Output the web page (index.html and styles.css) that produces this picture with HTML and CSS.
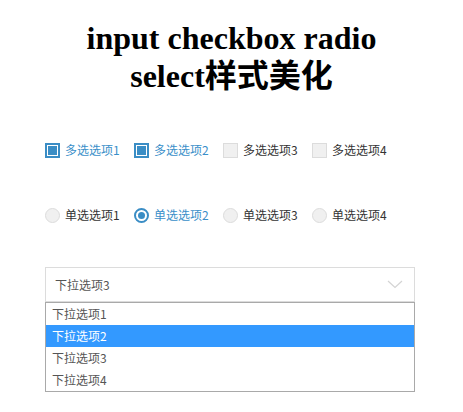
FILE: index.html
```html
<!DOCTYPE html>
<html>
<head>
<meta charset="utf-8">
<link rel="stylesheet" href="styles.css">
</head>
<body>
<h1 class="title">input checkbox radio select样式美化</h1>
<div class="wrap">
  <div class="row checks">
    <label class="opt on"><span class="box"></span>多选选项1</label>
    <label class="opt on"><span class="box"></span>多选选项2</label>
    <label class="opt"><span class="box"></span>多选选项3</label>
    <label class="opt"><span class="box"></span>多选选项4</label>
  </div>
  <div class="row radios">
    <label class="opt"><span class="dot"></span>单选选项1</label>
    <label class="opt on"><span class="dot"></span>单选选项2</label>
    <label class="opt"><span class="dot"></span>单选选项3</label>
    <label class="opt"><span class="dot"></span>单选选项4</label>
  </div>
  <div class="select">
    <span class="value">下拉选项3</span>
    <svg class="chev" width="16" height="9" viewBox="0 0 16 9"><path d="M1 1 L8 7.5 L15 1" fill="none" stroke="#d4d4d4" stroke-width="1.2"/></svg>
  </div>
  <ul class="list">
    <li>下拉选项1</li>
    <li class="sel">下拉选项2</li>
    <li>下拉选项3</li>
    <li>下拉选项4</li>
  </ul>
</div>
</body>
</html>
```
FILE: styles.css
```css
body {
  margin: 8px;
  background: #fff;
}
.title {
  font-family: "Liberation Serif", "Noto Sans CJK SC", serif;
  font-size: 32px;
  font-weight: bold;
  text-align: center;
  width: 300px;
  margin: 11px auto 0;
  line-height: 38px;
  color: #000;
}
.wrap {
  width: 370px;
  margin: 0 0 0 37px;
  font-family: "Noto Sans CJK SC", "Liberation Sans", sans-serif;
  font-size: 12px;
}
.row {
  display: flex;
  align-items: center;
  height: 20px;
}
.checks {
  margin-top: 45px;
}
.radios {
  margin-top: 45px;
}
.opt {
  display: flex;
  align-items: center;
  width: 89px;
  color: #333;
  line-height: 20px;
}
.opt.on {
  color: #3a8fc9;
}
.box {
  box-sizing: border-box;
  width: 15px;
  height: 15px;
  margin-right: 5px;
  border: 1px solid #dcdcdc;
  background: #f0f0f0;
}
.on .box {
  border: 2px solid #3a8dc5;
  padding: 1px;
  background: #3a8dc5;
  background-clip: content-box;
}
.dot {
  box-sizing: border-box;
  width: 15px;
  height: 15px;
  margin-right: 5px;
  border-radius: 50%;
  border: 1px solid #dcdcdc;
  background: #f0f0f0;
}
.on .dot {
  border: 2px solid #3a8dc5;
  padding: 2px;
  background: #3a8dc5;
  background-clip: content-box;
}
.select {
  margin-top: 42px;
  box-sizing: border-box;
  height: 35px;
  border: 1px solid #dcdcdc;
  display: flex;
  align-items: center;
  justify-content: space-between;
  padding: 0 11px 0 9px;
  color: #555;
}
.value {
  line-height: 20px;
}
.list {
  list-style: none;
  margin: 0;
  padding: 0;
  border: 1px solid #a9a9a9;
  color: #555;
}
.list li {
  height: 22px;
  line-height: 22px;
  padding-left: 6px;
}
.list li.sel {
  background: #3399ff;
  color: #fff;
}
```
